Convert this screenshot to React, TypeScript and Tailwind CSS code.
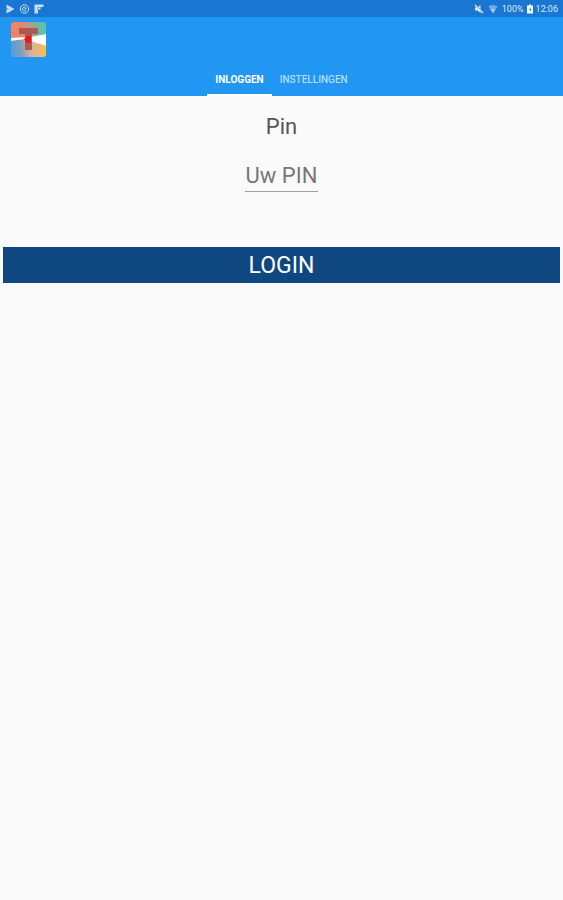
import { useState } from "react";
import { clsx } from "clsx";

const tabs = ["Inloggen", "Instellingen"];

const AppLogo: React.FC = () => (
  <svg viewBox="0 0 35 35" className="size-[35px]" role="img" aria-label="App logo">
    <defs>
      <clipPath id="logo-shape">
        <rect width="35" height="35" rx="3" />
      </clipPath>
      <linearGradient id="logo-top" x1="0" x2="1" y1="0" y2="0">
        <stop offset="0" stopColor="#f5835f" />
        <stop offset="0.4" stopColor="#d98a74" />
        <stop offset="0.7" stopColor="#7fb09a" />
        <stop offset="1" stopColor="#4fc9b4" />
      </linearGradient>
      <linearGradient id="logo-bottom" x1="0" x2="1" y1="0" y2="0">
        <stop offset="0" stopColor="#4a9fe0" />
        <stop offset="0.3" stopColor="#8a9db5" />
        <stop offset="0.6" stopColor="#d9b49a" />
        <stop offset="1" stopColor="#f8c04e" />
      </linearGradient>
      <filter id="logo-soft" x="-10%" y="-10%" width="120%" height="120%">
        <feGaussianBlur stdDeviation="0.7" />
      </filter>
    </defs>
    <g clipPath="url(#logo-shape)">
      <rect width="35" height="35" fill="url(#logo-top)" />
      <path d="M0 18H18L35 23V35H0z" fill="url(#logo-bottom)" />
      <g filter="url(#logo-soft)">
        <path d="M-1 16L15 15V17L-1 19z" fill="#fff" />
        <path d="M19 15L36 12V24L19 19z" fill="#fff" />
        <path d="M8 6H27V12H21V28H14V12H8z" fill="#b04a48" fillOpacity="0.85" />
        <path d="M13 17L16 14H20V21H16z" fill="#f0141c" />
      </g>
    </g>
  </svg>
);

const StatusBar: React.FC = () => (
  <div className="flex h-[17px] items-center justify-between bg-[#1976d2] px-[5px] text-[#dcebfb]">
    <div className="flex items-center gap-1">
      <svg viewBox="0 0 10 10" className="size-[10px]" fill="currentColor" aria-hidden="true">
        <path d="M1.5 0.5L9.5 5L1.5 9.5z" fillOpacity="0.9" />
        <path d="M1.5 4.2L4 5L1.5 5.8z" fill="#1976d2" />
      </svg>
      <svg viewBox="0 0 11 10" className="h-[10px] w-[11px]" fill="none" stroke="currentColor" aria-hidden="true">
        <circle cx="5.5" cy="5" r="4.2" strokeOpacity="0.9" />
        <path d="M7.2 3.8A2 2 0 1 0 7.2 6.2M5.5 4.8H7.5" strokeOpacity="0.9" />
      </svg>
      <svg viewBox="0 0 10 10" className="size-[10px]" fill="currentColor" aria-hidden="true">
        <path d="M0.5 0.5H9.5V3H6.5V5.5H4V9.5H0.5z" fillOpacity="0.9" />
        <path d="M3 3H6V4H4V6H3z" fill="#1976d2" fillOpacity="0.4" />
      </svg>
    </div>
    <div className="flex items-center pt-px text-[9px] leading-none">
      <svg viewBox="0 0 10 10" className="mr-1 size-[10px]" fill="currentColor" aria-hidden="true">
        <path d="M1 3.5H3.5L6.5 1V9L3.5 6.5H1z" />
        <path d="M2 1L9 8" stroke="#1976d2" />
        <path d="M1 1L9 9" stroke="currentColor" strokeWidth="1.2" />
      </svg>
      <svg viewBox="0 0 10 10" className="mr-1 size-[10px]" fill="currentColor" aria-hidden="true">
        <path d="M0.5 2.5C3 0.5 7 0.5 9.5 2.5L5 9.5z" fillOpacity="0.45" />
        <path d="M2.5 5.5C4 4.5 6 4.5 7.5 5.5L5 9.5z" fillOpacity="0.5" />
      </svg>
      <span>100%</span>
      <svg viewBox="0 0 6 10" className="mx-[3px] h-[10px] w-[6px]" fill="#fff" aria-hidden="true">
        <path d="M2 0.5H4V1.5H6V9.5H0V1.5H2z" />
        <path d="M3.5 3L2 5.8H3V8L4.3 5H3.4z" fill="#1976d2" />
      </svg>
      <span>12:06</span>
    </div>
  </div>
);

const App: React.FC = () => {
  const [active, setActive] = useState(tabs[0]);
  const [pin, setPin] = useState("");

  return (
    <div className="min-h-screen bg-[#fafafa] font-[Roboto,sans-serif]">
      <StatusBar />
      <header className="bg-[#2196f3]">
        <div className="flex h-[45px] items-center px-[11px]">
          <AppLogo />
        </div>
        <nav role="tablist" className="flex h-[34px] justify-center">
          {tabs.map(tab => (
            <button
              key={tab}
              type="button"
              role="tab"
              aria-selected={tab === active}
              onClick={() => setActive(tab)}
              className={clsx(
                "border-b-2 px-2 pt-[2px] text-[10px] uppercase",
                tab === active ? "border-white font-bold text-white" : "border-transparent font-medium text-[#b5dcfb]"
              )}
            >
              {tab}
            </button>
          ))}
        </nav>
      </header>

      <form className="flex flex-col px-[3px] pt-4" onSubmit={e => e.preventDefault()}>
        <label htmlFor="pin" className="self-center pt-px text-[22px] leading-7 text-[#555]">
          Pin
        </label>
        <input
          id="pin"
          type="text"
          inputMode="numeric"
          value={pin}
          placeholder="Uw PIN"
          onChange={e => setPin(e.target.value)}
          className="mt-[18px] h-[33px] w-[73px] self-center border-b border-[#a0a0a0] pt-px text-center text-[22px] text-[#555] outline-none placeholder:text-[#777]"
        />
        <button type="submit" className="mt-[55px] h-9 bg-[#0f4880] pt-px text-[23px] leading-none text-white uppercase">
          Login
        </button>
      </form>
    </div>
  );
};

export default App;
